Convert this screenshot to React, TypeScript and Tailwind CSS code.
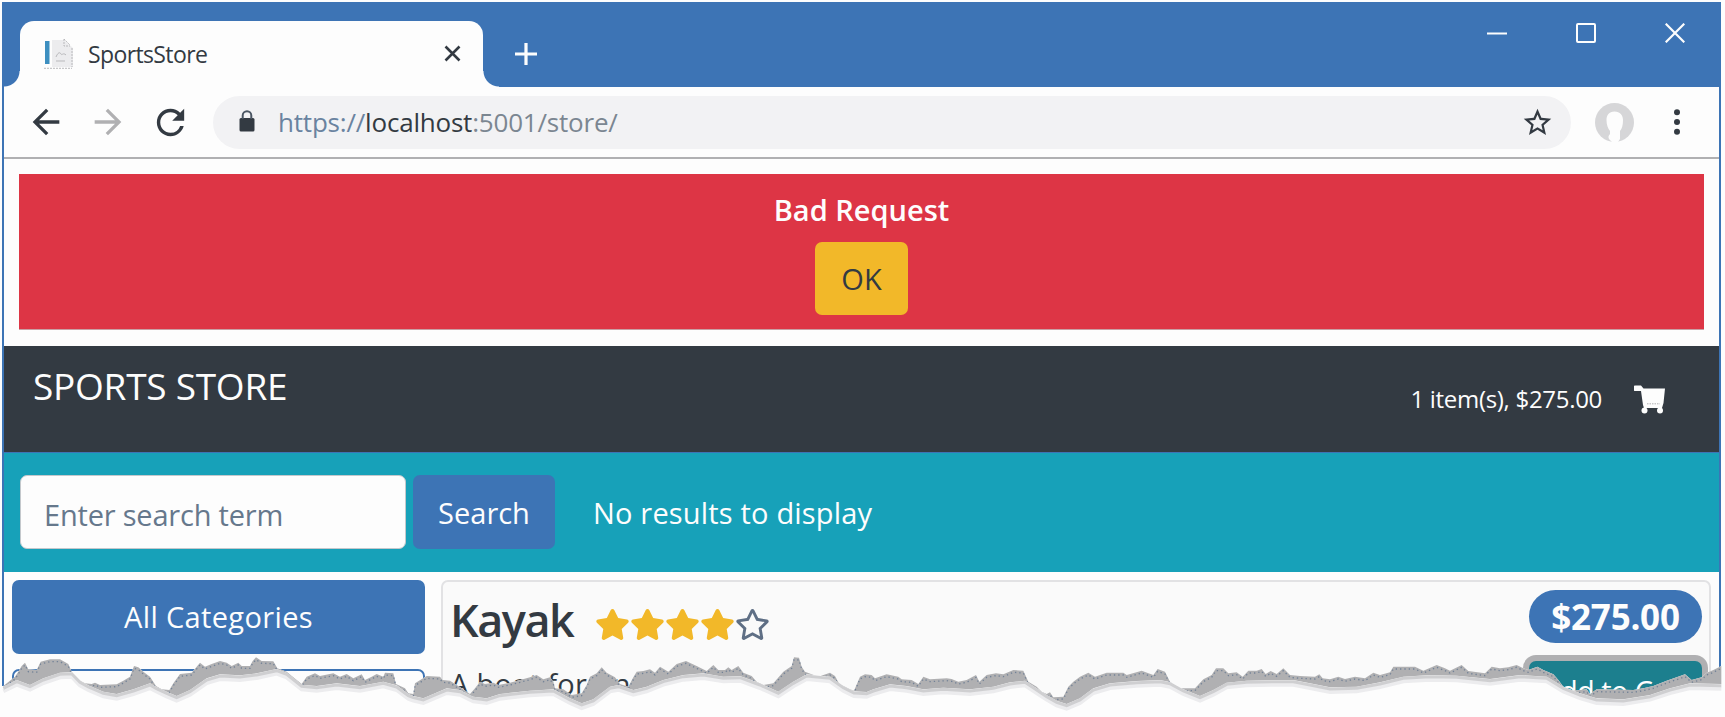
import type { ReactNode } from "react";
import { FaRegStar, FaStar } from "react-icons/fa";
import { MdArrowBack, MdArrowForward, MdRefresh, MdStarBorder } from "react-icons/md";

function FavIcon() {
  return (
    <svg width="32" height="32" viewBox="0 0 32 32" className="shrink-0">
      <path d="M0 29h9V2h12l9 8v19H0z" fill="#ececee" />
      <path d="M1 30.3h28M29 10v19M21 1v7h6M21 1l6 6" stroke="#b9b9bc" strokeWidth="1" strokeDasharray="2 1" fill="none" />
      <rect x="2" y="3" width="4.5" height="23" fill="#3d8fc0" />
      <path d="M13 19c2-5 4-5 5-3s2-2 5 1M13 23h9" stroke="#b9b9bc" strokeWidth="1" fill="none" />
    </svg>
  );
}

function CartIcon({ className }: { className: string }) {
  return (
    <svg width="32" height="29" viewBox="0 0 32 29" fill="#fdfdfd" className={className}>
      <path d="M1.500 0.500h5.500l2.500 3h21.500l-1.500 14.500l-1.500 5H10l-1-3l-2-14H1.500a2.500 2.500 0 0 1 0-5.500z" />
      <circle cx="10.500" cy="25.500" r="3" />
      <circle cx="26" cy="25.500" r="3" />
      <path d="M13 18.800h13" stroke="#b0b0b2" strokeWidth="1" strokeDasharray="1.500 1" />
    </svg>
  );
}

function TitleBar() {
  return (
    <div className="flex h-[85px] shrink-0 items-start bg-[#3d74b5] text-white">
      <div className="relative mt-[19px] ml-[16px] flex h-[66px] w-[463px] shrink-0 items-center rounded-t-[14px] bg-[#fdfdfd] pb-[1px] pl-[23px]">
        <span className="absolute bottom-0 -left-[16px] size-[16px] bg-[radial-gradient(circle_at_0_0,transparent_15px,#fdfdfd_16px)]" />
        <span className="absolute -right-[16px] bottom-0 size-[16px] bg-[radial-gradient(circle_at_100%_0,transparent_15px,#fdfdfd_16px)]" />
        <FavIcon />
        <span className="ml-[13px] text-[23px] leading-8 tracking-[-0.62px] text-[#333a42]">SportsStore</span>
        <svg width="17" height="17" viewBox="0 0 17 17" className="mr-[22px] ml-auto">
          <path d="M1.5 1.5l14 14M15.5 1.5l-14 14" stroke="#333a42" strokeWidth="2.6" />
        </svg>
      </div>
      <svg width="24" height="24" viewBox="0 0 24 24" className="mt-[40px] ml-[31px] shrink-0">
        <path d="M12 1v22M1 12h22" stroke="#fdfdfd" strokeWidth="3.2" />
      </svg>
      <div className="mt-[21px] mr-[34px] ml-auto flex items-center gap-[69px]">
        <svg width="20" height="20" viewBox="0 0 20 20">
          <path d="M0 10.500h20" stroke="#fdfdfd" strokeWidth="2" />
        </svg>
        <svg width="20" height="20" viewBox="0 0 20 20">
          <rect x="1" y="1" width="18" height="18" rx="1" stroke="#fdfdfd" strokeWidth="2" fill="none" />
        </svg>
        <svg width="20" height="20" viewBox="0 0 20 20">
          <path d="M0.7 0.7l18.6 18.6M19.3 0.7L0.7 19.3" stroke="#fdfdfd" strokeWidth="2.2" />
        </svg>
      </div>
    </div>
  );
}

function Toolbar() {
  return (
    <div className="flex h-[72px] shrink-0 items-center border-b-2 border-[#b0b0b2] pl-[22px] text-[#333a42]">
      <MdArrowBack size={40} className="shrink-0" />
      <MdArrowForward size={40} className="ml-[22px] shrink-0 text-[#b0b0b2]" />
      <MdRefresh size={41} className="ml-[22px] shrink-0" />
      <div className="ml-[22px] flex h-[53px] w-[1358px] shrink-0 items-center rounded-full bg-[#f2f2f4]">
        <svg width="16" height="22" viewBox="0 0 16 22" className="mb-[3px] ml-[26px] shrink-0">
          <rect x="0.5" y="8" width="15" height="13.500" rx="1.500" fill="#333a42" />
          <path d="M3.700 9V5.500a4.300 4.300 0 0 1 8.600 0V9" fill="none" stroke="#4b5663" strokeWidth="2" />
        </svg>
        <span className="ml-[23px] text-[26px] leading-9 tracking-[-0.2px] text-[#7b8691]">
          <span className="text-[#6a83a0]">https://</span>
          <span className="text-[#333a42]">localhost</span>:5001/store/
        </span>
        <MdStarBorder size={33} className="mr-[17px] ml-auto" />
      </div>
      <svg width="39" height="39" viewBox="0 0 39 39" className="ml-[24px] shrink-0">
        <circle cx="19.5" cy="19.5" r="19.5" fill="#d6d6d8" />
        <path d="M19.5 8.5c-5.500 0-8 4-8 8.500c0 5 1.500 8.500 3.500 11v3c-1.500 1.500-2 3-1 5l3 3h6l2-3v-8c2-2.500 3-6 3-11c0-4.500-3-8.500-8.500-8.500z" fill="#fdfdfd" />
      </svg>
      <svg width="6" height="26" viewBox="0 0 6 26" className="ml-[40px] shrink-0" fill="#333a42">
        <circle cx="3" cy="3.200" r="3" />
        <circle cx="3" cy="13" r="3" />
        <circle cx="3" cy="22.800" r="3" />
      </svg>
    </div>
  );
}

function Button({ className, children }: { className: string; children?: ReactNode }) {
  return (
    <button className={`flex shrink-0 items-center justify-center rounded-[7px] text-[29px] leading-10 ${className}`}>
      {children}
    </button>
  );
}

function ErrorBanner() {
  return (
    <div className="mx-[15px] mt-[15px] flex h-[156px] shrink-0 flex-col items-center border-b border-[#c9a0a4] bg-[#dd3545] pt-[14px]">
      <p className="text-[29px] leading-[44px] font-semibold text-[#fdfdfd]">Bad Request</p>
      <Button className="mt-[10px] h-[73px] w-[93px] bg-[#f2b829] text-[#333a42]">OK</Button>
    </div>
  );
}

function StoreHeader() {
  return (
    <div className="mt-[16px] flex h-[106px] shrink-0 items-start bg-[#333a42] pl-[29px] text-[#fdfdfd]">
      <h1 className="pt-[15px] text-[37px] leading-[50px] tracking-[-0.25px]">SPORTS STORE</h1>
      <span className="mt-[35px] ml-auto text-[24px] leading-9 tracking-[-0.3px]">1 item(s), $275.00</span>
      <CartIcon className="mt-[39px] mr-[53px] ml-[32px]" />
    </div>
  );
}

function SearchBar() {
  return (
    <div className="flex h-[120px] shrink-0 items-center border-t border-[#3d74b5] bg-[#17a1b9] pb-px pl-[16px] text-[#fdfdfd]">
      <input
        placeholder="Enter search term"
        className="h-[74px] w-[386px] shrink-0 rounded-[7px] border border-[#c4c8cc] bg-[#fdfdfd] pt-[5px] pl-[23px] text-[29px] tracking-[-0.2px] placeholder:text-[#66788c]"
      />
      <Button className="ml-[7px] h-[74px] w-[142px] bg-[#3d74b5] pt-[2px]">Search</Button>
      <span className="ml-[38px] pt-[2px] text-[29px] leading-10 tracking-[0.18px]">No results to display</span>
    </div>
  );
}

function Rating() {
  return (
    <div className="mt-[27px] ml-[22px] flex text-[#f2b829]">
      {[1, 2, 3, 4].map((n) => (
        <FaStar key={n} size={31} className="w-[35px]" />
      ))}
      <FaRegStar size={31} className="w-[35px] text-[#5f6f85]" />
    </div>
  );
}

function Catalog() {
  return (
    <div className="flex grow items-start gap-[16px] pt-[8px] pr-[8px] pl-[8px]">
      <div className="flex w-[413px] shrink-0 flex-col gap-[15px]">
        <Button className="h-[74px] bg-[#3d74b5] tracking-[0.35px] text-[#fdfdfd]">All Categories</Button>
        <Button className="h-[74px] border-2 border-[#3d74b5] text-[#3d74b5]" />
      </div>
      <div className="h-[200px] grow rounded-[7px] border-2 border-[#e2e2e4] bg-[#fafafa] pr-[7px] pl-[7px]">
        <div className="flex h-[86px] items-start">
          <h2 className="mt-[7px] text-[45px] leading-[62px] font-semibold tracking-[-1.500px] text-[#333a42]">Kayak</h2>
          <Rating />
          <div className="mt-[8px] ml-auto flex h-[53px] w-[173px] items-center justify-center rounded-full bg-[#3d74b5] text-[35px] leading-[48px] font-bold tracking-[-0.25px] text-[#fdfdfd]">
            $275.00
          </div>
        </div>
        <div className="flex items-start justify-between">
          <p className="-mt-[4px] text-[29px] leading-10 tracking-[0.3px] text-[#333a42]">A boat for one person</p>
          <Button className="-mt-[7px] h-[74px] w-[173px] bg-[#1c7f8e] pb-[15px] tracking-[-0.6px] text-[#fdfdfd] ring-[6px] ring-[#b0b0b2]">
            Add to Cart
          </Button>
        </div>
      </div>
    </div>
  );
}

const TEAR_TOP =
  "10,378 45,350 55,335 65,318 75,308 85,328 110,330 122,305 150,298 180,298 205,312 215,335 222,350 240,362 255,370 275,372 285,368 300,375 350,373 370,362 390,350 402,318 415,322 430,335 450,350 468,378 485,388 508,390 520,370 540,342 575,338 600,308 615,320 635,312 660,303 680,308 695,318 715,308 725,318 750,318 758,303 768,292 785,303 820,304 832,325 860,335 880,352 905,372 920,350 945,340 960,348 1000,340 1020,350 1040,342 1060,355 1085,343 1095,360 1115,350 1130,342 1150,350 1155,338 1180,340 1188,372 1215,385 1225,400 1240,402 1245,370 1280,348 " +
  "1320,350 1328,360 1350,362 1375,378 1410,402 1425,385 1440,365 1455,372 1480,368 1495,375 1530,368 1560,360 1590,352 1610,345 1630,358 1650,352 1660,365 1665,385 1690,388 1715,405 1745,400 1760,375 1770,350 1790,340 1805,322 1820,338 1845,352 1860,372 1885,380 1900,352 1910,335 1930,333 1950,328 1965,338 1980,320 2005,335 2030,312 2058,303 2090,318 2120,333 2140,315 2155,330 2175,330 2185,322 2195,330 2215,318 2230,338 2255,348 2270,365 2290,375 2320,370 2350,335 2375,318 2382,292 2397,293 2405,320 2415,335 2455,350 2490,338 2505,348 2518,372 2550,388 2562,392 2580,350 " +
  "2595,343 2615,345 2625,355 2660,343 2695,350 2705,358 2735,360 2755,372 2770,350 2790,358 2840,355 2855,357 2875,365 2900,360 2928,345 2938,365 2960,345 2988,340 3010,343 3040,330 3070,332 3085,365 3110,380 3125,395 3140,402 3150,397 3160,412 3190,410 3205,380 3220,365 3240,350 3265,338 3285,350 3320,338 3370,338 3380,345 3425,332 3460,345 3473,327 3495,335 3510,365 3535,385 3585,385 3610,358 3635,345 3648,325 3670,325 3685,340 3710,337 3728,350 3745,332 3770,332 3785,327 3797,342 3812,333 3830,342 3850,325 3870,345 " +
  "3900,348 3945,350 3958,343 3968,355 3990,358 4015,350 4035,357 4065,350 4095,355 4120,338 4140,345 4170,337 4180,320 4245,320 4270,332 4310,315 4335,325 4350,332 4385,315 4405,333 4455,340 4475,320 4500,325 4525,322 4550,315 4570,325 4585,330 4612,320 4630,330 4660,343 4675,360 4690,380 4720,392 4760,388 4770,402 4790,388 4900,390 4930,385 4960,378 5000,362 5030,352 5055,343 5075,360 5105,352 5120,338 5140,330 5164,318";

const TEAR_EDGE =
  "10,380 50,360 90,375 130,355 180,338 215,336 240,362 265,376 310,395 350,402 400,388 450,370 468,380 500,395 530,408 570,390 620,355 660,343 720,346 770,340 830,327 860,338 905,374 950,378 1010,370 1080,378 1150,365 1190,376 1225,402 1240,408 1270,415 1300,402 " +
  "1340,385 1380,390 1420,410 1460,415 1500,402 1590,392 1660,388 1710,415 1745,430 1780,418 1830,380 1855,375 1900,390 1940,380 1990,360 2050,345 2110,340 2170,350 2220,348 2280,370 2335,395 2380,365 2420,343 2490,350 2530,378 2562,394 2600,396 " +
  "2620,388 2670,373 2720,378 2770,388 2830,383 2910,388 2980,380 3030,367 3075,362 3110,385 3140,405 3170,422 3200,432 3240,415 3280,385 3330,370 3410,363 3480,360 3510,366 3550,388 3600,408 3640,390 3680,368 3740,362 3820,360 " +
  "3880,360 3930,370 3990,382 4070,380 4140,367 4210,350 4290,345 4370,347 4470,357 4560,345 4640,350 4690,380 4740,400 4790,415 4870,418 4950,405 5010,385 5070,370 5164,372";

function TornEdge() {
  return (
    <svg width="1725" height="157" viewBox="0 0 5175 471" className="absolute top-[560px] left-0" aria-hidden="true">
      <polygon points={`0,378 ${TEAR_TOP} 5175,318 5175,471 0,471`} fill="#fdfdfd" />
      <polygon points={`${TEAR_TOP} 5164,471 10,471`} fill="#b0b0b2" />
      <polyline
        points={TEAR_TOP}
        fill="none"
        stroke="#5a6f8c"
        strokeWidth="4"
        strokeDasharray="4 9"
        strokeOpacity="0.7"
        transform="translate(0 7)"
      />
      <polygon points={`0,378 ${TEAR_EDGE} 5175,372 5175,471 0,471`} fill="#fdfdfd" />
      <polyline points={TEAR_EDGE} fill="none" stroke="#ececee" strokeWidth="12" transform="translate(0 14)" />
      <polyline points={TEAR_EDGE} fill="none" stroke="#cfcfd1" strokeWidth="9" transform="translate(0 5)" />
    </svg>
  );
}

export default function App() {
  return (
    <div className="relative flex h-[717px] w-[1725px] overflow-hidden bg-[#fdfdfd] pt-[2px] pl-[2px] font-['Open_Sans','Noto_Sans',sans-serif]">
      <div className="flex h-[715px] w-[1719px] flex-col overflow-hidden border-x-2 border-[#3d74b5]">
        <TitleBar />
        <Toolbar />
        <ErrorBanner />
        <StoreHeader />
        <SearchBar />
        <Catalog />
      </div>
      <TornEdge />
    </div>
  );
}
